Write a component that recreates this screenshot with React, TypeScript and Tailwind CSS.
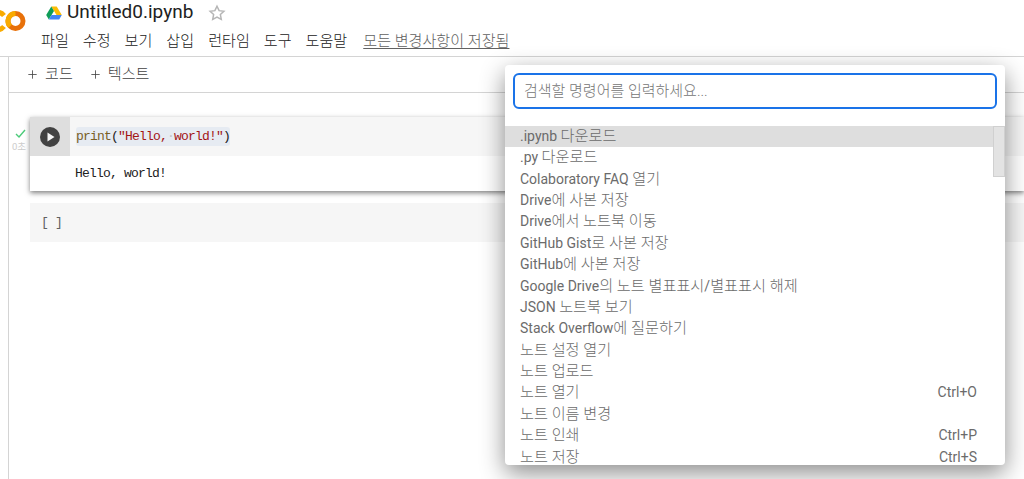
import React from 'react';
import { Plus } from 'lucide-react';

const menus = ['파일', '수정', '보기', '삽입', '런타임', '도구', '도움말'];

const commands: { label: string; keys?: string }[] = [
  { label: '.ipynb 다운로드' },
  { label: '.py 다운로드' },
  { label: 'Colaboratory FAQ 열기' },
  { label: 'Drive에 사본 저장' },
  { label: 'Drive에서 노트북 이동' },
  { label: 'GitHub Gist로 사본 저장' },
  { label: 'GitHub에 사본 저장' },
  { label: 'Google Drive의 노트 별표표시/별표표시 해제' },
  { label: 'JSON 노트북 보기' },
  { label: 'Stack Overflow에 질문하기' },
  { label: '노트 설정 열기' },
  { label: '노트 업로드' },
  { label: '노트 열기', keys: 'Ctrl+O' },
  { label: '노트 이름 변경' },
  { label: '노트 인쇄', keys: 'Ctrl+P' },
  { label: '노트 저장', keys: 'Ctrl+S' },
];

const sans = "font-['Roboto','Noto_Sans_CJK_KR',sans-serif]";
const mono = "font-['Liberation_Mono','Noto_Sans_CJK_KR',monospace]";

// hangul runs in the reference are wider than the latin next to them
function Label({ text }: { text: string }) {
  const parts = text.split(/([가-힣]+(?: [가-힣]+)*)/);
  return (
    <span>
      {parts.map((p, i) => (
        <span key={i} className={i % 2 === 1 ? 'text-[15.200px] font-light' : ''}>{p}</span>
      ))}
    </span>
  );
}

function ColabLogo() {
  return (
    <svg width="46" height="40" viewBox="0 0 46 40" className="absolute left-0 top-0" fill="none" strokeWidth="5">
      <path d="M-4 12.500 A8.500 8.500 0 0 1 4 15.500" stroke="#f9ab00" />
      <path d="M-4 29.500 A8.500 8.500 0 0 0 4 26.500" stroke="#f9ab00" />
      <circle cx="15.500" cy="21" r="7.500" stroke="#e8710a" />
      <path d="M10.200 26.300 A7.500 7.500 0 0 1 15.500 13.500" stroke="#f9ab00" />
    </svg>
  );
}

function DriveIcon() {
  return (
    <svg width="16" height="14" viewBox="0 0 16 14">
      <path d="M5.300 0.500 H10.700 L15.800 9 H10.500 Z" fill="#fbbc04" />
      <path d="M5.300 0.500 L8 5 L2.800 13.500 L0.200 9 Z" fill="#0f9d58" />
      <path d="M5.500 9 H15.800 L13.200 13.500 H2.800 Z" fill="#4285f4" />
    </svg>
  );
}

function CommandPalette() {
  return (
    <div className={`absolute left-[505px] top-[65px] w-[500px] h-[400px] bg-white rounded-[4px] overflow-hidden shadow-[0_8px_24px_rgba(0,0,0,0.45)] ${sans}`}>
      <div className="pl-2 pr-2 pt-2">
        <div className="h-[36px] border-2 border-[#1a73e8] rounded-[6px] flex items-center px-[9px] text-[15px] font-light text-[#757575]">
          검색할 명령어를 입력하세요...
        </div>
      </div>
      <div className="relative mt-[17px]">
        {commands.map((c, i) => (
          <div
            key={c.label}
            className={`h-[21.400px] pl-[15px] pr-[28px] pb-[1px] flex items-center justify-between text-[14px] text-[#6b6b6b] ${i === 0 ? 'bg-[#dedede]' : ''}`}
          >
            <Label text={c.label} />
            {c.keys && <span>{c.keys}</span>}
          </div>
        ))}
        <div className="absolute right-0 top-0 w-[12px] h-[51px] bg-[#e3e3e3] border border-[#d0d0d0]" />
      </div>
    </div>
  );
}

export default function App() {
  return (
    <div className={`relative w-[1024px] h-[479px] overflow-hidden bg-white ${sans}`}>
      <header className="h-[57px] border-b border-[#d4d4d4] flex">
        <div className="w-[46px] relative overflow-hidden shrink-0">
          <ColabLogo />
        </div>
        <div className="flex flex-col">
          <div className="flex items-center h-[25px]">
            <DriveIcon />
            <span className="ml-[5px] text-[19px] text-[#212121]">Untitled0.ipynb</span>
            <svg width="18" height="18" viewBox="0 0 24 24" fill="none" stroke="#b5b5b5" strokeWidth="2" className="ml-[15px]">
              <path d="M12 3l2.800 5.900 6.400.8-4.700 4.400 1.200 6.400L12 17.400l-5.700 3.100 1.200-6.400L2.800 9.700l6.400-.8z" />
            </svg>
          </div>
          <nav className="flex items-center mt-[5px] -ml-[5px] text-[15.100px] font-light leading-[22px] text-[#212121]">
            {menus.map((m) => (
              <span key={m} className="mr-[14px]">{m}</span>
            ))}
            <span className="ml-[2px] text-[#616161] underline underline-offset-2">모든 변경사항이 저장됨</span>
          </nav>
        </div>
      </header>

      <div className="flex h-[422px]">
        <div className="w-[9px] border-r border-[#d4d4d4] shrink-0" />
        <main className="flex-1 min-w-0">
          <div className="h-[36px] border-b border-[#d4d4d4] flex items-center pl-[17px] text-[15.100px] font-light text-[#424242]">
            <Plus size={13} strokeWidth={1.5} />
            <span className="ml-[6px] mr-[16px]">코드</span>
            <Plus size={13} strokeWidth={1.5} />
            <span className="ml-[6px]">텍스트</span>
          </div>
          <div className="flex mt-[24px]">
            <div className="w-[21px] shrink-0 flex flex-col items-end pt-[12px] pr-[4px] text-[#cccccc]">
              <svg width="11" height="9" viewBox="0 0 11 9" fill="none" stroke="#4ccb7a" strokeWidth="1.400"><path d="M1 5l3 3 6-7" /></svg>
              <span className="text-[9.500px] leading-[11px] mt-[3px] whitespace-nowrap">0초</span>
            </div>
            <div className="flex-1 min-w-0">
              <div className="shadow-[0_2px_5px_rgba(0,0,0,0.5)] bg-white">
                <div className="flex h-[39px] bg-[#f6f6f6]">
                  <div className="w-[40px] bg-[#dedede] flex items-center justify-center">
                    <svg width="20" height="20" viewBox="0 0 20 20">
                      <circle cx="10" cy="10" r="10" fill="#424242" />
                      <path d="M7.500 5.500 L14.500 10 L7.500 14.500 Z" fill="#f5f5f5" />
                    </svg>
                  </div>
                  <div className={`ml-[6px] mt-[10px] h-[19px] bg-[#e6ebf2] rounded-[3px] text-[13px] tracking-[-0.8px] leading-[19px] whitespace-pre ${mono}`}>
                    <span className="text-[#795e26]">print</span>
                    <span className="text-[#212121]">(</span>
                    <span className="text-[#a31515]">"Hello,</span>
                    <span className="text-[#c4c4c4]">·</span>
                    <span className="text-[#a31515]">world!"</span>
                    <span className="text-[#212121]">)</span>
                  </div>
                </div>
                <div className={`h-[35px] pl-[45px] flex items-center text-[13px] tracking-[-0.8px] text-[#212121] ${mono}`}>Hello, world!</div>
              </div>
              <div className="mt-[12px] h-[39px] bg-[#f6f6f6] flex items-center pl-[11px] text-[13px] tracking-[-0.8px] text-[#616161]">
                <span className={mono}>[ ]</span>
              </div>
            </div>
          </div>
        </main>
      </div>

      <CommandPalette />
    </div>
  );
}
